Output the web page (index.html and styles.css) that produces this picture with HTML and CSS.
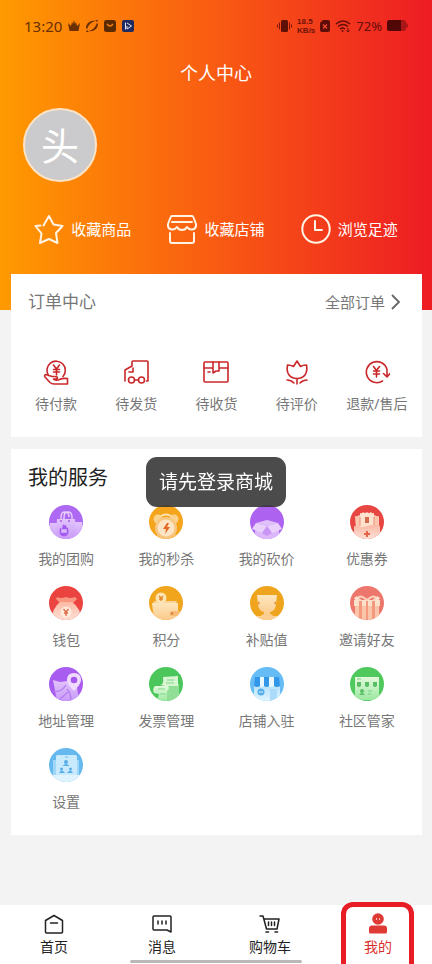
FILE: index.html
```html
<!DOCTYPE html>
<html lang="zh-CN">
<head>
<meta charset="utf-8">
<meta name="viewport" content="width=device-width, initial-scale=1">
<title>个人中心</title>
<link rel="stylesheet" href="styles.css">
</head>
<body>
<svg class="defs" width="0" height="0" aria-hidden="true">
  <defs>
    <clipPath id="disc"><circle cx="17" cy="17" r="17"/></clipPath>
    <linearGradient id="lilac" x1="0" y1="0" x2="0" y2="1"><stop offset="0" stop-color="#e2c4fb"/><stop offset="1" stop-color="#c99bf8"/></linearGradient>
    <linearGradient id="cream" x1="0" y1="0" x2="0" y2="1"><stop offset="0" stop-color="#fde6bd"/><stop offset="1" stop-color="#fbc98a"/></linearGradient>
    <linearGradient id="blush" x1="0" y1="0" x2="0" y2="1"><stop offset="0" stop-color="#fbb9a4"/><stop offset="1" stop-color="#fde0d6"/></linearGradient>
    <linearGradient id="mint" x1="0" y1="0" x2="0" y2="1"><stop offset="0" stop-color="#e3f9dc"/><stop offset="1" stop-color="#9be8a0"/></linearGradient>
    <linearGradient id="sky" x1="0" y1="0" x2="0" y2="1"><stop offset="0" stop-color="#b4e1fc"/><stop offset="1" stop-color="#e0f4ff"/></linearGradient>
  </defs>
</svg>
<div class="app">
  <header class="hero">
    <div class="status">
      <div class="status-side">
        <span class="time">13:20</span>
        <svg width="12" height="12" viewBox="0 0 12 12"><path fill="#6a3002" d="M0 3l3 3 1-4 1 2 1-4 1 4 1-2 1 4 3-3-1.500 8h-9z"/></svg>
        <svg width="12" height="12" viewBox="0 0 12 12"><path fill="#6a3002" d="M0 8C0 3 5 0 9 1 6 2 3 4 2 7L1 9zM12 4c0 5-5 8-9 7 3-1 6-3 7-6l1-2zM9 0l3 0-1 2zM0 12l1-2 2 2z"/></svg>
        <svg width="12" height="12" viewBox="0 0 12 12"><rect width="12" height="12" rx="2.500" fill="#5a2a02"/><path d="M3 4q3 4 6 0" fill="none" stroke="#f97d10" stroke-width="1.300"/></svg>
        <svg width="12" height="12" viewBox="0 0 12 12"><rect width="12" height="12" rx="2" fill="#1f2b60"/><path d="M3.500 2.500v7M5 3l4.500 3L5 9V6" fill="none" stroke="#e8e6f4"/></svg>
      </div>
      <div class="status-side status-right">
        <svg width="15" height="14" viewBox="0 0 15 14"><rect x="4" y="1" width="7" height="12" rx="1.500" fill="#5e1006"/><path d="M2.500 3.500v7M12.500 3.500v7M.5 5.500v3M14.500 5.500v3" stroke="#7a170a" stroke-width="1"/></svg>
        <span class="speed"><span>18.5</span><span>KB/s</span></span>
        <svg width="10" height="12" viewBox="0 0 10 12"><path fill="#5e0d08" d="M3 0h5q2 0 2 2v8q0 2-2 2H2q-2 0-2-2V3z"/><path d="M3 4.500l4 4M7 4.500l-4 4" stroke="#ef4a30" stroke-width="1.300"/></svg>
        <svg width="16" height="12" viewBox="0 0 16 12"><path d="M1 4q7-6 14 0M3 6.500q5-4 10 0M5 9q2.500-2 5 0" fill="none" stroke="#650e0a" stroke-width="1.500"/><circle cx="7.500" cy="11" r="1" fill="#650e0a"/><path d="M13 8v4M11.500 10.500L13 12l1.500-1.500" fill="none" stroke="#650e0a"/></svg>
        <span class="percent">72%</span>
        <svg width="21" height="12" viewBox="0 0 21 12"><rect width="19" height="11" rx="2.500" fill="#a91716"/><path d="M2.500 0H14v11H2.500Q0 11 0 8.500v-6Q0 0 2.500 0z" fill="#520707"/><path d="M19 3q2 0 2 2.500T19 8z" fill="#a91716"/></svg>
      </div>
    </div>
    <h1 class="title">个人中心</h1>
    <div class="avatar">头</div>
    <nav class="quick">
      <a href="#goods"><svg width="30" height="30" viewBox="0 0 30 30"><path d="M9.500 11.500L15 2l4.500 8.500 9 1.500-6.500 7 1.500 10L15 25l-9 4 1.500-9.500L1.500 12l5-.5"/></svg>收藏商品</a>
      <a href="#shops"><svg width="30" height="30" viewBox="0 0 30 30"><path d="M5 2h20q1 0 1.500 1.500L29 10v2q-.5 3-3.500 3.500Q22 16 20 13q-1.500 3-5 3t-5-3q-2 3-5.500 2.500Q1.500 15 1 12v-2l2.500-6.500Q4 2 5 2zM5 8h20M3 19v8q0 2 2 2h20q2 0 2-2v-8"/></svg>收藏店铺</a>
      <a href="#history"><svg width="30" height="30" viewBox="0 0 30 30"><circle cx="15" cy="15" r="13.700"/><path d="M14 7v9h7"/></svg>浏览足迹</a>
    </nav>
  </header>

  <main class="content">
    <section class="card orders">
      <div class="card-head">
        <h2>订单中心</h2>
        <a href="#orders">全部订单<svg width="10" height="16" viewBox="0 0 10 16"><path d="M1 1l7 7-7 7" fill="none" stroke="#666" stroke-width="1.800"/></svg></a>
      </div>
      <nav class="order-grid">
        <a href="#pay"><svg width="26" height="26" viewBox="0 0 26 26"><path d="M5.500 16.500A9.200 9.200 0 1 1 20 17.500M10.500 6l3 4 3-4M13.500 10v6M10.500 10.500h6M10.500 13h6M3 15.500q-2 .5-1 2.500l5 5.500q1.500 1.500 4 1.500h13.500v-5.500q-5-.5-8 1-3 1.500-6-.5 3.500 0 4-1 0-1.500-3-1.500H9z"/></svg>待付款</a>
        <a href="#ship"><svg width="26" height="26" viewBox="0 0 26 26"><path d="M2 22V11l7-4V3q0-1 1-1h14q1 0 1 1v19h-1.500M6 13h4V9M12 21h3"/><circle cx="8.500" cy="21" r="3"/><circle cx="18.500" cy="21" r="3"/></svg>待发货</a>
        <a href="#receive"><svg width="26" height="26" viewBox="0 0 26 26"><rect x="1" y="3" width="24" height="20" rx="1"/><path d="M1 9h9M16 9h9M10 3v11l3-2h3V3M5 13h2"/></svg>待收货</a>
        <a href="#review"><svg width="26" height="26" viewBox="0 0 26 26"><path d="M3.500 6Q7 6 9.500 7.500L13 2l3.500 5.500Q19 6 22.500 6C24 14 20.500 19.500 13 19.500S2 14 3.500 6zM13 19.500V25M3 21q4 0 7 3M23 21q-4 0-7 3"/></svg>待评价</a>
        <a href="#refund"><svg width="26" height="26" viewBox="0 0 26 26"><path d="M18.500 22A10.500 10.500 0 1 1 23 10.500V18M19.500 14.500L23 18l3-3.500M9.500 7.500l3 4 3-4M12.500 11.500v6.500M9.500 12h6M9.500 15h6"/></svg>退款/售后</a>
      </nav>
    </section>

    <section class="card services">
      <h2>我的服务</h2>
      <nav class="service-grid">
        <a href="#group"><svg width="34" height="34" viewBox="0 0 34 34"><g clip-path="url(#disc)"><path fill="#ad69f1" d="M0 0h34v34H0z"/><path fill="url(#lilac)" d="M1 18h8v16H1zM25 17h8v17h-8z"/><path d="M12 16v-4q0-5 4-5t4 5M15 16v-4q0-5 4-5t4 5v4" fill="none" stroke="#e9cffb" stroke-width="1.400"/><path fill="url(#lilac)" d="M8 14h18l1 20H7z"/><circle cx="12" cy="16" r="1" fill="#a15bea"/><circle cx="20" cy="16" r="1" fill="#a15bea"/><path fill="#a45cf0" d="M14 19q1 2 3 1 0 3 2 3 2 8-4 8.500Q9 31 11 23l2 1z"/><path d="M13 24v4M17 24v4M13 26h4M15 24v4" stroke="#efdcfd"/></g></svg>我的团购</a>
        <a href="#flash"><svg width="34" height="34" viewBox="0 0 34 34"><g clip-path="url(#disc)"><path fill="#f4a51c" d="M0 0h34v34H0z"/><circle cx="9" cy="14" r="4.500" fill="#fbd18c"/><circle cx="25" cy="14" r="4.500" fill="#fbd18c"/><path d="M12 11q5-3 10 0" fill="none" stroke="#fde3b7" stroke-width="2"/><path fill="#f9c274" d="M8 28h5l-4 6zM21 28h5l2 6z"/><circle cx="17" cy="23" r="11" fill="#f9c680"/><circle cx="17" cy="23" r="8.500" fill="#fde4c4"/><path fill="#e96724" d="M18 18l-4 6h3l-1 5 5-7h-3l2-4z"/></g></svg>我的秒杀</a>
        <a href="#bargain"><svg width="34" height="34" viewBox="0 0 34 34"><g clip-path="url(#disc)"><path fill="#ad63f0" d="M0 0h34v34H0z"/><path fill="#c490f5" d="M5 19l12-4 12 4-12 6z"/><path fill="#dcb8fa" d="M5 21h24v13H5z"/><path fill="#ead1fc" d="M6 18l11 3-5 7-10-4zM28 18l-11 3 5 7 10-4z"/><path fill="#c995f7" d="M17 21l-5 7 5 3 5-3z"/><path fill="#dfbff9" d="M6 18l11-3v6zM28 18l-11-3v6z"/></g></svg>我的砍价</a>
        <a href="#coupon"><svg width="34" height="34" viewBox="0 0 34 34"><g clip-path="url(#disc)"><path fill="#e74742" d="M0 0h34v34H0z"/><path fill="#fbc7ae" d="M5 11q2 1 4-1l4 2-2 14H6zM29 11q-2 1-4-1l-4 2 2 14h6z"/><path fill="#fee2ce" d="M10 8q2 1 3-1 2 2 4 0 2 2 4 0 1 2 3 1v17H10z"/><path d="M10 12v9M24 12v9" stroke="#ee9177"/><path fill="#d66b4c" d="M15 12h4v6h-4z"/><path fill="url(#blush)" d="M4 21q7 2 13 0 7-2 13 0v13H4z"/><path d="M17 26v6M14 29h6" stroke="#e76448" stroke-width="2"/></g></svg>优惠券</a>
        <a href="#wallet"><svg width="34" height="34" viewBox="0 0 34 34"><g clip-path="url(#disc)"><path fill="#eb4440" d="M0 0h34v34H0z"/><path fill="#f8967f" d="M8 11q4 2 9 0 5 2 9 0l2 2-4 4H11l-4-4z"/><path fill="url(#blush)" d="M11 16h12q9 6 9 18H3q0-12 8-18z"/><circle cx="17" cy="26" r="5.500" fill="#feebdb"/><path d="M14.500 23l2.500 3 2.500-3M17 26v4M15 27h4" fill="none" stroke="#df6847" stroke-width="1.300"/></g></svg>钱包</a>
        <a href="#points"><svg width="34" height="34" viewBox="0 0 34 34"><g clip-path="url(#disc)"><path fill="#f1a51d" d="M0 0h34v34H0z"/><path fill="#fbd394" d="M5 15h23l-2 4H4z"/><circle cx="12" cy="12" r="5.500" fill="#fde4b2"/><path d="M10 10l2 2 2-2M12 12v3M10 13h4" fill="none" stroke="#e18628" stroke-width="1.300"/><path fill="url(#cream)" d="M3 17h26v17H5z"/><path fill="#f6bc76" d="M22 25h9v5h-9q-3-2 0-5z"/><circle cx="23" cy="27.500" r="1.200" fill="#dd7e38"/></g></svg>积分</a>
        <a href="#subsidy"><svg width="34" height="34" viewBox="0 0 34 34"><g clip-path="url(#disc)"><path fill="#eea51d" d="M0 0h34v34H0z"/><path fill="url(#cream)" d="M7 9h20l-1 10q-1 6-6 7v2q3 0 3 3H11q0-3 3-3v-2q-5-1-6-7z"/><path fill="#e38d2b" d="M8 15l2 2-2 2zM26 15l-2 2 2 2z"/><path fill="#fbcf94" d="M7 30h20v4H7z"/></g></svg>补贴值</a>
        <a href="#invite"><svg width="34" height="34" viewBox="0 0 34 34"><g clip-path="url(#disc)"><path fill="#ed776c" d="M0 0h34v34H0z"/><path fill="#fbc5aa" d="M5 20h24v14H5z"/><path fill="#fce1ca" d="M4 14h26v6H4z"/><path fill="#f2997f" d="M9 15h3v19H9zM22 15h3v19h-3zM16 15h2v19h-2z"/><path fill="none" stroke="#fcd4bd" stroke-width="2" d="M17 14q-6-5-8-3t2 3M17 14q6-5 8-3t-2 3"/><path fill="#fde1ce" d="M4 12l3-2 2 3-3 2zM30 12l-3-2-2 3 3 2z"/></g></svg>邀请好友</a>
        <a href="#address"><svg width="34" height="34" viewBox="0 0 34 34"><g clip-path="url(#disc)"><path fill="#a95df0" d="M0 0h34v34H0z"/><path fill="url(#lilac)" d="M4 13l7 2 8-1 9 6 2 14H8z"/><path d="M5 24q7 2 12-6M18 22q4 4 4 12M19 25l-9 8" fill="none" stroke="#b47bf0" stroke-width="1.300"/><path fill="#f0dafd" d="M25 6q7 0 7 7 0 4-7 11-7-7-7-11 0-7 7-7z"/><circle cx="25" cy="13" r="3.300" fill="#a657ed"/></g></svg>地址管理</a>
        <a href="#invoice"><svg width="34" height="34" viewBox="0 0 34 34"><g clip-path="url(#disc)"><path fill="#4bc65b" d="M0 0h34v34H0z"/><path fill="#91df96" d="M15 17h15v17H15z"/><path fill="#d8f5d2" d="M14 10l15-1v10H16l-5-1q4 0 3-8z"/><path fill="url(#mint)" d="M6 19h13q2 3-1 5v10H8l2-7-5-1q-2-4 1-7z"/><path d="M9 22h7M18 13h7M17 16h8M11 27h6" stroke="#7fd98a"/></g></svg>发票管理</a>
        <a href="#join"><svg width="34" height="34" viewBox="0 0 34 34"><g clip-path="url(#disc)"><path fill="#66bdf5" d="M0 0h34v34H0z"/><path fill="url(#sky)" d="M4 17h26v17H4z"/><path fill="#3397e9" d="M5 10h5v9q-3 2-6 0zM14 10h5v9q-2 2-5 0zM24 10h5l1 9q-3 2-6 0z"/><path fill="#e9f7ff" d="M10 10h4v9q-2 2-4 0zM19 10h5v9q-2 2-5 0z"/><circle cx="11" cy="25" r="3.500" fill="#56aeeb"/><path d="M9 25h4" stroke="#d6f0ff"/><path fill="#aadcfa" d="M20 22h7v12h-7z"/></g></svg>店铺入驻</a>
        <a href="#community"><svg width="34" height="34" viewBox="0 0 34 34"><g clip-path="url(#disc)"><path fill="#4fc85e" d="M0 0h34v34H0z"/><path fill="url(#mint)" d="M5 10h24v23H5z"/><path fill="#58bd64" d="M7 15h4v4q-2 2-4 0zM15 15h4v4q-2 2-4 0zM23 15h4v4q-2 2-4 0z"/><circle cx="12" cy="24" r="2" fill="#5abe67"/><path fill="#5abe67" d="M9 28q3-4 6 0z"/><path d="M18 24h4M18 27h3M7 12h4" stroke="#77ce80"/></g></svg>社区管家</a>
        <a href="#settings"><svg width="34" height="34" viewBox="0 0 34 34"><g clip-path="url(#disc)"><path fill="#66b9ef" d="M0 0h34v34H0z"/><path fill="#a0d7f9" d="M4 12h26v15H4z"/><rect x="7" y="7" width="21" height="20" rx="1.500" fill="#c9eafd"/><path fill="#e0f4ff" d="M4 27h26v7H4z"/><g fill="#58aee8"><circle cx="17" cy="14" r="2"/><path d="M13.500 18q3.500-4 7 0z"/><circle cx="12.500" cy="21" r="1.500"/><path d="M10 25q2.500-5 6 0z"/><circle cx="21.500" cy="21" r="1.500"/><path d="M18 25q3.500-5 6 0z"/></g><path d="M16 9h3" stroke="#70baec"/></g></svg>设置</a>
      </nav>
    </section>
  </main>

  <nav class="tabs">
    <a href="#home"><svg width="22" height="22" viewBox="0 0 22 22"><path d="M2.500 7.500L11 2.500l8.500 5V19q0 1-1 1h-15q-1 0-1-1zM7.500 10h7"/></svg>首页</a>
    <a href="#messages"><svg width="22" height="22" viewBox="0 0 22 22"><path d="M3 3h16q1 0 1 1v15l-4-2H3q-1 0-1-1V4q0-1 1-1zM7 8v3M11 8v3M15 8v3"/></svg>消息</a>
    <a href="#cart"><svg width="22" height="22" viewBox="0 0 22 22"><path d="M1 3h3l3.500 13H18l2-10H5M9.500 9v3.500M12.500 9v3.500M15.500 9v3.500M7 19h2.500M16 19h2.500"/></svg>购物车</a>
    <a href="#me" class="active" aria-current="page"><svg width="22" height="22" viewBox="0 0 22 22"><circle class="solid" cx="11" cy="6" r="5.800"/><path class="solid" d="M5 12.500h12q3 0 3 3V19q0 1.500-1.500 1.500h-15Q2 20.500 2 19v-3.500q0-3 3-3z"/><path class="eyes" d="M9.500 5.500v1M12.500 5.500v1"/></svg>我的</a>
    <span class="highlight"></span>
    <span class="home-bar"></span>
  </nav>
</div>
<div class="toast" role="status">请先登录商城</div>
</body>
</html>
```

FILE: styles.css
```css
* {
  box-sizing: border-box;
}

body {
  margin: 0;
  background: #f3f3f3;
  color: #777;
  font-family: "Noto Sans", "Noto Sans CJK SC", sans-serif;
  font-size: 14px;
  line-height: 20px;
}

a {
  color: inherit;
  text-decoration: none;
}

h1,
h2 {
  margin: 0;
  font-weight: 400;
}

svg {
  display: block;
  flex: none;
}

.defs {
  position: absolute;
}

.app {
  display: flex;
  flex-direction: column;
  min-height: 100vh;
}

.hero {
  padding-bottom: 66px;
  background: linear-gradient(90deg, #ff9a00 0%, #f95b12 50%, #ed1c24 100%);
  color: #fff;
}

.status {
  display: flex;
  align-items: center;
  justify-content: space-between;
  height: 52px;
  padding: 0 24px;
}

.status-side {
  display: flex;
  align-items: center;
  gap: 6px;
}

.status-right {
  gap: 5px;
}

.time {
  color: #6a3002;
  font-size: 15px;
}

.speed {
  display: flex;
  flex-direction: column;
  gap: 1px;
  color: #6f1208;
  font-family: "Liberation Sans", sans-serif;
  font-size: 8px;
  font-weight: 700;
  line-height: 8px;
}

.percent {
  color: #650e0a;
  font-size: 13px;
}

.title {
  margin-top: 9px;
  font-size: 18px;
  line-height: 24px;
  text-align: center;
}

.avatar {
  display: flex;
  align-items: center;
  justify-content: center;
  width: 74px;
  height: 74px;
  margin: 23px 0 32px 23px;
  border: 2px solid #fbe3c6;
  border-radius: 50%;
  background: #cbcacc;
  font-size: 38px;
}

.quick {
  display: grid;
  grid-template-columns: repeat(3, 1fr);
  padding: 0 16px;
  font-size: 15px;
}

.quick a {
  display: flex;
  align-items: center;
  justify-content: center;
  gap: 7px;
}

.quick svg {
  fill: none;
  stroke: #fff3e4;
  stroke-width: 2;
  stroke-linecap: round;
  stroke-linejoin: round;
}

.content {
  flex: 1;
  margin-top: -36px;
  padding: 0 10px 24px 11px;
}

.card {
  background: #fff;
}

.orders {
  margin-bottom: 12px;
  padding: 16px 5px 23px;
}

.card-head {
  display: flex;
  align-items: center;
  justify-content: space-between;
  padding: 0 16px 0 12px;
  line-height: 24px;
}

.card-head h2 {
  font-size: 17px;
}

.card-head a {
  display: flex;
  align-items: center;
  gap: 6px;
  font-size: 15px;
}

.order-grid {
  display: grid;
  grid-template-columns: repeat(5, 1fr);
  margin-top: 45px;
}

.order-grid a,
.service-grid a {
  display: flex;
  flex-direction: column;
  align-items: center;
}

.order-grid a {
  gap: 9px;
}

.service-grid a {
  gap: 10px;
}

.order-grid svg {
  fill: none;
  stroke: #c9272a;
  stroke-width: 1.6;
  stroke-linecap: round;
  stroke-linejoin: round;
}

.services {
  padding: 15px 5px 23px;
}

.services h2 {
  padding-left: 12px;
  color: #222;
  font-size: 20px;
  line-height: 28px;
}

.service-grid {
  display: grid;
  grid-template-columns: repeat(4, 1fr);
  row-gap: 17px;
  margin-top: 13px;
}

.tabs {
  position: relative;
  display: grid;
  grid-template-columns: repeat(4, 1fr);
  padding: 8px 0 7px;
  background: #fff;
  color: #222;
}

.tabs a {
  display: flex;
  flex-direction: column;
  align-items: center;
  gap: 2px;
}

.tabs svg {
  fill: none;
  stroke: #222;
  stroke-width: 1.5;
  stroke-linecap: round;
  stroke-linejoin: round;
}

.tabs .active {
  color: #d9302f;
}

.tabs .solid {
  fill: #df3b36;
  stroke: none;
}

.tabs .eyes {
  stroke: #fbd5d0;
  stroke-width: 1;
}

.highlight {
  position: absolute;
  top: -3px;
  right: 18px;
  bottom: 0;
  width: 73px;
  border: 5px solid #e81c24;
  border-bottom: 0;
  border-radius: 12px 12px 0 0;
}

.home-bar {
  position: absolute;
  bottom: 1px;
  left: 50%;
  width: 172px;
  height: 3px;
  border-radius: 2px;
  background: #b9b9b9;
  transform: translateX(-50%);
}

.toast {
  position: fixed;
  top: 50%;
  left: 50%;
  padding: 13px;
  border-radius: 11px;
  background: rgba(50, 50, 50, 0.88);
  color: #fff;
  font-size: 19px;
  line-height: 24px;
  white-space: nowrap;
  transform: translate(-50%, -50%);
}
```
